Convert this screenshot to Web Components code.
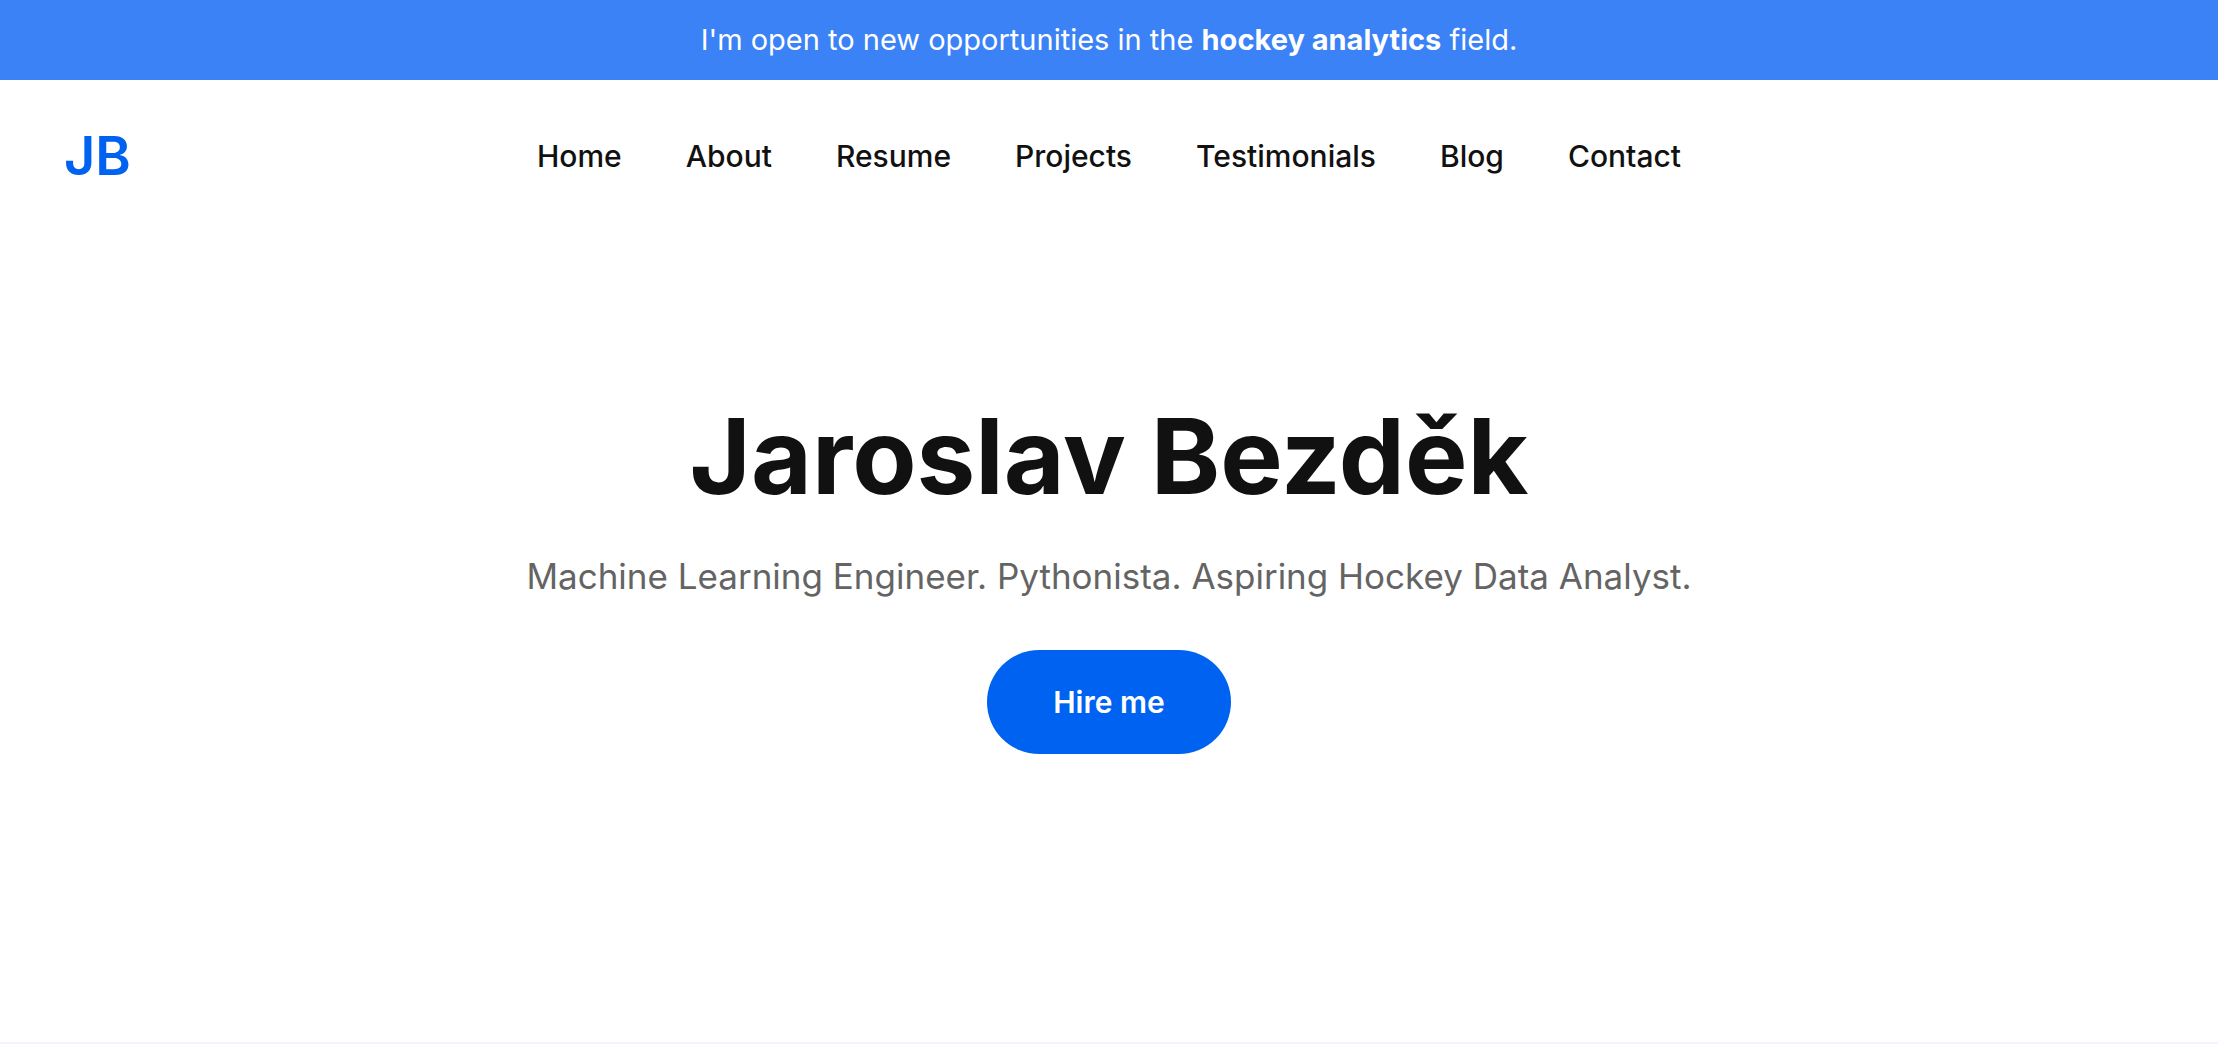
<!DOCTYPE html>
<html lang="en">
<head>
<meta charset="utf-8">
<meta name="viewport" content="width=device-width, initial-scale=1">
<title>Jaroslav Bezděk</title>
<style>
  body {
    margin: 0;
    background: #fff;
    color: #111;
    font-family: Inter, "Liberation Sans", sans-serif;
    --brand: #0062f1;
    --banner: #3b82f6;
    --muted: #646464;
    --line: #f0f4ff;
  }
</style>
</head>
<body>
<portfolio-page></portfolio-page>

<template id="banner-template">
  <style>
    :host { display: block; background: var(--banner); color: #fff; }
    p { margin: 0; padding: 20px; font-size: 29px; line-height: 40px; text-align: center; }
  </style>
  <p><slot></slot></p>
</template>

<template id="nav-link-template">
  <style>
    :host { display: block; }
    a { color: inherit; text-decoration: none; font-size: 30px; font-weight: 500; line-height: 40px; }
  </style>
  <a><slot></slot></a>
</template>

<template id="header-template">
  <style>
    :host { display: grid; grid-template-columns: 1fr auto 1fr; align-items: center; padding: 40px 64px; }
    .logo { justify-self: start; color: var(--brand); font-size: 54px; font-weight: 600; line-height: 72px; text-decoration: none; }
    nav { display: flex; flex-wrap: wrap; gap: 16px 64px; }
  </style>
  <a class="logo" href="#home">JB</a>
  <nav aria-label="Main"><slot></slot></nav>
</template>

<template id="hero-template">
  <style>
    :host { display: flex; flex-direction: column; align-items: center; padding: 152px 32px 288px; text-align: center; border-bottom: 2px solid var(--line); }
    h1 { margin: 0; font-size: 105px; font-weight: 700; line-height: 144px; }
    p { margin: 0; padding: 16px 0 42px; color: var(--muted); font-size: 35px; line-height: 64px; }
    button { border: 0; border-radius: 52px; background: var(--brand); color: #fff; font: 600 30px/40px Inter, "Liberation Sans", sans-serif; padding: 32px 66px; cursor: pointer; }
  </style>
  <h1><slot name="name"></slot></h1>
  <p><slot name="summary"></slot></p>
  <button type="button"><slot name="action"></slot></button>
</template>

<template id="page-template">
  <style>:host { display: block; }</style>
  <announcement-banner>I'm open to new opportunities in the <strong>hockey analytics</strong> field.</announcement-banner>
  <site-header>
    <nav-link href="#home">Home</nav-link>
    <nav-link href="#about">About</nav-link>
    <nav-link href="#resume">Resume</nav-link>
    <nav-link href="#projects">Projects</nav-link>
    <nav-link href="#testimonials">Testimonials</nav-link>
    <nav-link href="#blog">Blog</nav-link>
    <nav-link href="#contact">Contact</nav-link>
  </site-header>
  <hero-section>
    <span slot="name">Jaroslav Bezděk</span>
    <span slot="summary">Machine Learning Engineer. Pythonista. Aspiring Hockey Data Analyst.</span>
    <span slot="action">Hire me</span>
  </hero-section>
</template>

<script>
  class TemplateElement extends HTMLElement {
    constructor() {
      super();
      const template = document.getElementById(this.constructor.templateId);
      this.attachShadow({ mode: "open" }).append(document.importNode(template.content, true));
    }
  }
  class AnnouncementBanner extends TemplateElement { static templateId = "banner-template"; }
  class NavLink extends TemplateElement {
    static templateId = "nav-link-template";
    connectedCallback() {
      this.shadowRoot.querySelector("a").href = this.getAttribute("href") || "#";
    }
  }
  class SiteHeader extends TemplateElement { static templateId = "header-template"; }
  class HeroSection extends TemplateElement { static templateId = "hero-template"; }
  class PortfolioPage extends TemplateElement { static templateId = "page-template"; }

  customElements.define("announcement-banner", AnnouncementBanner);
  customElements.define("nav-link", NavLink);
  customElements.define("site-header", SiteHeader);
  customElements.define("hero-section", HeroSection);
  customElements.define("portfolio-page", PortfolioPage);
</script>
</body>
</html>
